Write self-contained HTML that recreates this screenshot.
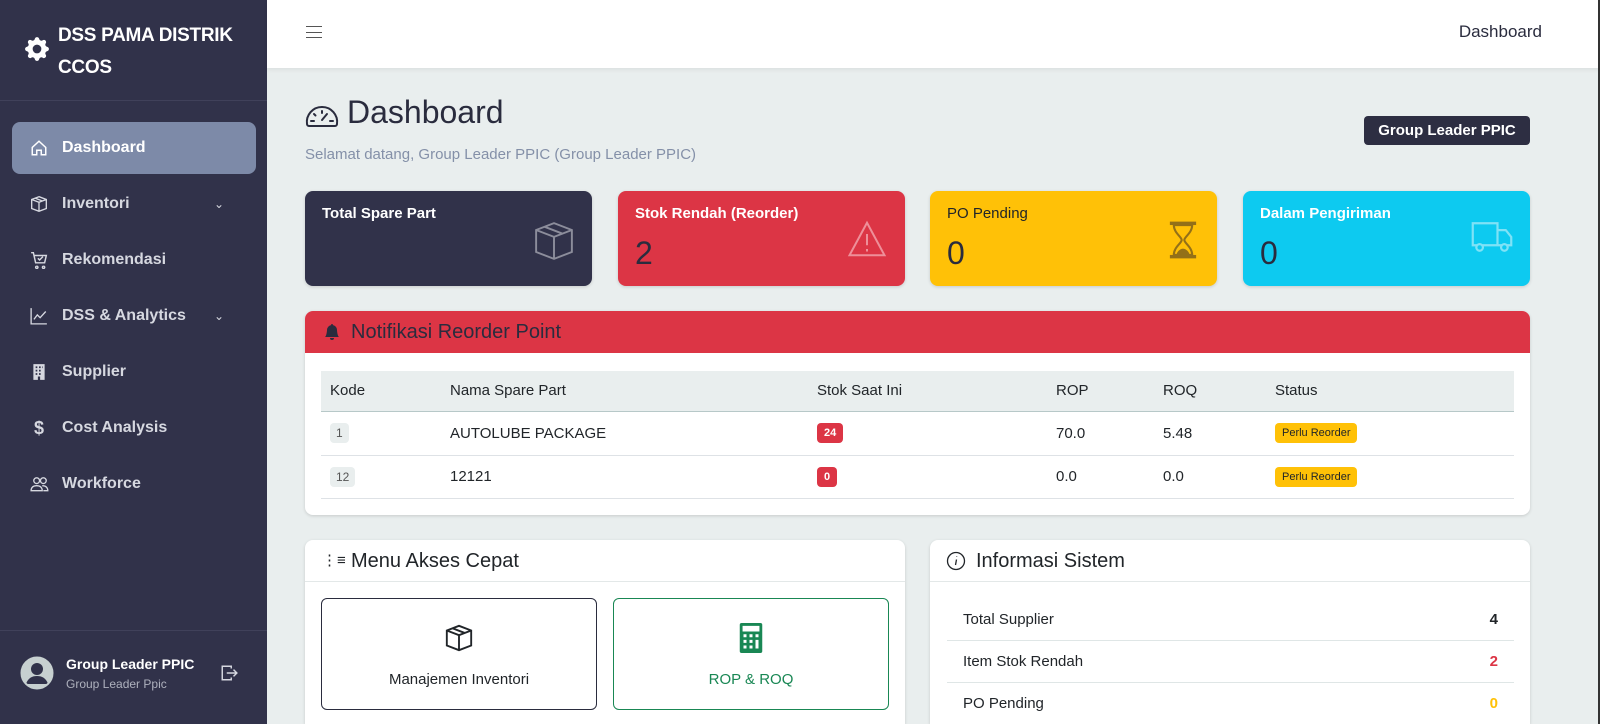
<!DOCTYPE html>
<html><head><meta charset="utf-8">
<style>
*{box-sizing:border-box;margin:0;padding:0}
html{width:1600px;height:724px;overflow:hidden}
body{width:1600px;height:724px;overflow:hidden;font-family:"Liberation Sans",sans-serif;background:#e9eeee;position:relative;color:#212529}
.sb{position:absolute;left:0;top:0;width:267px;height:724px;background:#31324a;color:#fff}
.brand{position:absolute;left:58px;top:20px;font-size:19px;font-weight:bold;line-height:32px;letter-spacing:-0.3px}
.sbline{position:absolute;left:0;top:100px;width:267px;border-top:1px solid #40415a}
.nav{position:absolute;left:12px;width:244px;height:52px;border-radius:8px;color:#d6d8e0;font-size:16px;font-weight:bold;line-height:52px;padding-left:50px}
.nav.act{background:#7d8aa8;color:#fff}
.nav svg{position:absolute;left:18px;top:17px}
.chev{position:absolute;right:32px;top:0;font-weight:normal;font-size:12px}
.top{position:absolute;left:267px;top:0;width:1333px;height:68px;background:#fff;box-shadow:0 2px 4px rgba(0,0,0,.06)}
.card{position:absolute;border-radius:8px;box-shadow:0 1px 3px rgba(0,0,0,.15)}
.stat .t{position:absolute;left:17px;top:14px;font-size:15px;font-weight:bold}
.stat .n{position:absolute;left:17px;top:44px;font-size:32px;color:#2a2c3e}
.stat svg{position:absolute;right:16px;top:28px}
table{border-collapse:collapse;font-size:15px}
td,th{text-align:left;font-weight:normal;padding:0 0 0 9px}
.badge{display:inline-block;font-size:11px;font-weight:bold;border-radius:4px;padding:4px 7px;line-height:12px}
.btn{position:absolute;border-radius:6px;background:#fff;text-align:center;font-size:15px}
.row{position:absolute;left:947px;width:567px;height:42px;font-size:15px;border-bottom:1px solid #dfe6e6;line-height:42px;padding:0 16px}
.row b{position:absolute;right:16px;top:0}
</style></head><body>
<div class="sb">
 <svg style="position:absolute;left:25px;top:37px" width="24" height="24" viewBox="0 0 16 16" fill="#fff"><path d="M9.4 1.1c-.4-1.4-2.4-1.4-2.8 0l-.1.3a1.5 1.5 0 0 1-2.1.9l-.3-.2c-1.3-.7-2.7.7-2 2l.2.3a1.5 1.5 0 0 1-.9 2.1l-.3.1c-1.4.4-1.4 2.4 0 2.8l.3.1a1.5 1.5 0 0 1 .9 2.1l-.2.3c-.7 1.3.7 2.7 2 2l.3-.2a1.5 1.5 0 0 1 2.1.9l.1.3c.4 1.4 2.4 1.4 2.8 0l.1-.3a1.5 1.5 0 0 1 2.1-.9l.3.2c1.3.7 2.7-.7 2-2l-.2-.3a1.5 1.5 0 0 1 .9-2.1l.3-.1c1.4-.4 1.4-2.4 0-2.8l-.3-.1a1.5 1.5 0 0 1-.9-2.1l.2-.3c.7-1.3-.7-2.7-2-2l-.3.2a1.5 1.5 0 0 1-2.1-.9zM8 10.9a2.9 2.9 0 1 1 0-5.8 2.9 2.9 0 0 1 0 5.8"/></svg>
 <div class="brand">DSS PAMA DISTRIK<br>CCOS</div>
 <div class="sbline"></div>
 <div class="nav act" style="top:122px"><svg width="18" height="18" viewBox="0 0 16 16" fill="none" stroke="#fff" stroke-width="1.3"><path d="M2 7.5 8 2l6 5.5V14H10v-4H6v4H2z"/></svg>Dashboard</div>
 <div class="nav" style="top:178px"><svg width="18" height="18" viewBox="0 0 16 16" fill="none" stroke="#d6d8e0" stroke-width="1.2"><path d="M8 1.5 14.5 4v8L8 14.5 1.5 12V4zM1.5 4 8 6.5 14.5 4M8 6.5v8M4.5 2.8l6.5 2.5"/></svg>Inventori<span class="chev">&#8964;</span></div>
 <div class="nav" style="top:234px"><svg width="18" height="18" viewBox="0 0 16 16" fill="none" stroke="#d6d8e0" stroke-width="1.3"><path d="M1 1.5h2l2 9h8l1.5-6.5H4M6 13.5a1 1 0 1 0 .1 0M12 13.5a1 1 0 1 0 .1 0M7 6.5l1.5 1.5 3-3"/></svg>Rekomendasi</div>
 <div class="nav" style="top:290px"><svg width="18" height="18" viewBox="0 0 16 16" fill="none" stroke="#d6d8e0" stroke-width="1.2"><path d="M1 1v14h14M3.5 11l3-4 2.5 2.5L14 4"/></svg>DSS &amp; Analytics<span class="chev">&#8964;</span></div>
 <div class="nav" style="top:346px"><svg width="18" height="18" viewBox="0 0 16 16" fill="#d6d8e0"><path d="M3 1h10v14H9v-3H7v3H3zm2 2v1.5h1.5V3zm3 0v1.5h1.5V3zm3 0v1.5h.5V3zM5 6v1.5h1.5V6zm3 0v1.5h1.5V6zM5 9v1.5h1.5V9zm3 0v1.5h1.5V9z"/></svg>Supplier</div>
 <div class="nav" style="top:402px"><span style="position:absolute;left:22px;font-size:18px">$</span>Cost Analysis</div>
 <div class="nav" style="top:458px"><svg width="20" height="18" viewBox="0 0 18 16" fill="none" stroke="#d6d8e0" stroke-width="1.2"><circle cx="6" cy="5" r="2.6"/><circle cx="12" cy="5" r="2.6"/><path d="M1 14c0-3 2-4.5 5-4.5s5 1.5 5 4.5zM11 9.5c3 0 5 1.5 5 4.5h-4"/></svg>Workforce</div>
 <div style="position:absolute;left:0;top:630px;width:267px;border-top:1px solid #40415a"></div>
 <svg style="position:absolute;left:20px;top:656px" width="34" height="34" viewBox="0 0 34 34"><circle cx="17" cy="17" r="15.5" fill="#c7d0d0"/><circle cx="17" cy="13" r="6" fill="#31324a"/><path d="M6 28c2-6 6-8 11-8s9 2 11 8" fill="#31324a"/><circle cx="17" cy="17" r="15.5" fill="none" stroke="#c7d0d0" stroke-width="2"/></svg>
 <div style="position:absolute;left:66px;top:656px;font-size:14px;font-weight:bold">Group Leader PPIC</div>
 <div style="position:absolute;left:66px;top:677px;font-size:12px;color:#aeb1bd">Group Leader Ppic</div>
 <svg style="position:absolute;left:219px;top:664px" width="20" height="18" viewBox="0 0 16 16" fill="none" stroke="#d6d8e0" stroke-width="1.3"><path d="M10 4V2H2v12h8v-2M6 8h9M12 5l3 3-3 3"/></svg>
</div>
<div class="top">
 <div style="position:absolute;left:39px;top:26px;width:16px;border-top:1.5px solid #555;height:12px;border-bottom:1.5px solid #555"><div style="margin-top:4.5px;border-top:1.5px solid #555"></div></div>
 <div style="position:absolute;right:58px;top:22px;font-size:17px;color:#2a2c3e">Dashboard</div>
</div>
<svg style="position:absolute;left:305px;top:101px" width="34" height="28" viewBox="0 0 34 28" fill="none" stroke="#2a2c3e" stroke-width="2" stroke-linecap="round"><path d="M4 25a2 2 0 0 1-2-2A15 15 0 0 1 17 6a15 15 0 0 1 15 17 2 2 0 0 1-2 2z" stroke-linejoin="round"/><path d="M17 19l5-6M17 10v2M9 13l1.5 1.5M6 20h3M25 20h3"/></svg>
<div style="position:absolute;left:347px;top:94px;font-size:32px;color:#2a2c3e">Dashboard</div>
<div style="position:absolute;left:305px;top:146px;font-size:15px;color:#8490a8">Selamat datang, Group Leader PPIC (Group Leader PPIC)</div>
<div style="position:absolute;left:1364px;top:116px;width:166px;height:29px;background:#2d2e42;border-radius:4px;color:#fff;font-size:15px;font-weight:bold;text-align:center;line-height:29px">Group Leader PPIC</div>

<div class="card stat" style="left:305px;top:191px;width:287px;height:95px;background:#31324a;color:#fff"><div class="t">Total Spare Part</div>
<svg width="44" height="44" viewBox="0 0 16 16" fill="none" stroke="#8c8d9b" stroke-width=".7"><path d="M8 1.5 14.5 4v8L8 14.5 1.5 12V4zM1.5 4 8 6.5 14.5 4M8 6.5v8M4.5 2.8l6.5 2.5"/></svg></div>
<div class="card stat" style="left:618px;top:191px;width:287px;height:95px;background:#dc3545;color:#fff"><div class="t">Stok Rendah (Reorder)</div><div class="n">2</div>
<svg width="44" height="40" viewBox="0 0 16 16" fill="none" stroke="#ee8f99" stroke-width=".8"><path d="M8 1.5 15 14.5H1z"/><path d="M8 6v4.5M8 12v1"/></svg></div>
<div class="card stat" style="left:930px;top:191px;width:287px;height:95px;background:#ffc107;color:#212529"><div class="t" style="font-weight:normal">PO Pending</div><div class="n">0</div>
<svg width="36" height="42" viewBox="0 0 12 16" fill="#937018"><rect x="1" y="1" width="10" height="1.3"/><rect x="1" y="13.7" width="10" height="1.3"/><path d="M2.5 2.3h7c0 3-3 4.5-3 5.7s3 2.7 3 5.7h-7c0-3 3-4.5 3-5.7s-3-2.7-3-5.7z" fill="none" stroke="#937018" stroke-width=".8"/><path d="M3.5 13.5h5c-.5-1.7-2-2.2-2.5-2.2s-2 .5-2.5 2.2z"/></svg></div>
<div class="card stat" style="left:1243px;top:191px;width:287px;height:95px;background:#0dcaf0;color:#fff"><div class="t">Dalam Pengiriman</div><div class="n">0</div>
<svg width="44" height="36" viewBox="0 0 16 12" fill="none" stroke="#7fe2f6" stroke-width=".8"><path d="M1 1h9v8H1zM10 3.5h3l2 2.5v3h-5"/><circle cx="3.5" cy="9.8" r="1.2" fill="#0dcaf0"/><circle cx="12.5" cy="9.8" r="1.2" fill="#0dcaf0"/></svg></div>

<div class="card" style="left:305px;top:311px;width:1225px;height:204px;background:#fff;overflow:hidden">
 <div style="height:42px;background:#dc3545;position:relative"><svg style="position:absolute;left:19px;top:12px" width="16" height="18" viewBox="0 0 16 16" fill="#2a2c3e"><path d="M8 16a2 2 0 0 0 2-2H6a2 2 0 0 0 2 2m.995-14.901a1 1 0 1 0-1.99 0A5 5 0 0 0 3 6c0 1.098-.5 6-2 7h14c-1.5-1-2-5.902-2-7 0-2.42-1.720-4.44-4.005-4.901"/></svg>
 <span style="position:absolute;left:46px;top:10px;font-size:20px;color:#2a2c3e">Notifikasi Reorder Point</span></div>
 <table style="position:absolute;left:16px;top:60px;width:1193px">
  <tr style="background:#e9eeee;height:40px;border-bottom:1.5px solid #b7c8c8"><th style="width:120px">Kode</th><th style="width:367px">Nama Spare Part</th><th style="width:239px">Stok Saat Ini</th><th style="width:107px">ROP</th><th style="width:112px">ROQ</th><th>Status</th></tr>
  <tr style="height:44px;border-bottom:1px solid #dee2e6"><td><span class="badge" style="background:#e9eeee;color:#555;font-weight:normal;font-size:12px;padding:4px 6px">1</span></td><td>AUTOLUBE PACKAGE</td><td><span class="badge" style="background:#dc3545;color:#fff">24</span></td><td>70.0</td><td>5.48</td><td><span class="badge" style="background:#ffc107;font-weight:normal">Perlu Reorder</span></td></tr>
  <tr style="height:43px;border-bottom:1px solid #dee2e6"><td><span class="badge" style="background:#e9eeee;color:#555;font-weight:normal;font-size:12px;padding:4px 6px">12</span></td><td>12121</td><td><span class="badge" style="background:#dc3545;color:#fff">0</span></td><td>0.0</td><td>0.0</td><td><span class="badge" style="background:#ffc107;font-weight:normal">Perlu Reorder</span></td></tr>
 </table>
</div>

<div class="card" style="left:305px;top:540px;width:600px;height:184px;background:#fff;border-radius:8px 8px 0 0">
 <div style="height:42px;border-bottom:1px solid #e3e8e8;position:relative"><span style="position:absolute;left:17px;top:11px;font-size:15px">&#8942;&#8801;</span><span style="position:absolute;left:46px;top:10px;font-size:20px">Menu Akses Cepat</span></div>
</div>
<div class="btn" style="left:321px;top:598px;width:276px;height:112px;border:1px solid #2a2c3e">
 <svg style="margin-top:24px" width="30" height="30" viewBox="0 0 16 16" fill="none" stroke="#212529" stroke-width="1"><path d="M8 1.5 14.5 4v8L8 14.5 1.5 12V4zM1.5 4 8 6.5 14.5 4M8 6.5v8M4.5 2.8l6.5 2.5"/></svg>
 <div style="margin-top:14px">Manajemen Inventori</div></div>
<div class="btn" style="left:613px;top:598px;width:276px;height:112px;border:1px solid #198754;color:#198754">
 <svg style="margin-top:24px" width="24" height="30" viewBox="0 0 12 16" fill="#198754"><path d="M1 0h10a1 1 0 0 1 1 1v14a1 1 0 0 1-1 1H1a1 1 0 0 1-1-1V1a1 1 0 0 1 1-1zm.5 1.5v3h9v-3zM2 6v1.6h1.6V6zm3.2 0v1.6h1.6V6zm3.2 0v1.6H10V6zM2 9v1.6h1.6V9zm3.2 0v1.6h1.6V9zm3.2 0v4.6H10V9zM2 12v1.6h1.6V12zm3.2 0v1.6h1.6V12z"/></svg>
 <div style="margin-top:14px">ROP &amp; ROQ</div></div>

<div class="card" style="left:930px;top:540px;width:600px;height:184px;background:#fff;border-radius:8px 8px 0 0">
 <div style="height:42px;border-bottom:1px solid #e3e8e8;position:relative"><svg style="position:absolute;left:16px;top:11px" width="20" height="20" viewBox="0 0 20 20" fill="none" stroke="#212529" stroke-width="1.3"><circle cx="10" cy="10" r="8.5"/><path d="M10.5 8.5 9.5 14M10.7 5.5v.5"/></svg><span style="position:absolute;left:46px;top:10px;font-size:20px">Informasi Sistem</span></div>
</div>
<div class="row" style="top:599px">Total Supplier<b style="color:#212529">4</b></div>
<div class="row" style="top:641px">Item Stok Rendah<b style="color:#dc3545">2</b></div>
<div class="row" style="top:683px;height:41px;border-bottom:none">PO Pending<b style="color:#ffc107">0</b></div>
<div style="position:absolute;left:1598px;top:0;width:2px;height:724px;background:#333"></div>
</body></html>
